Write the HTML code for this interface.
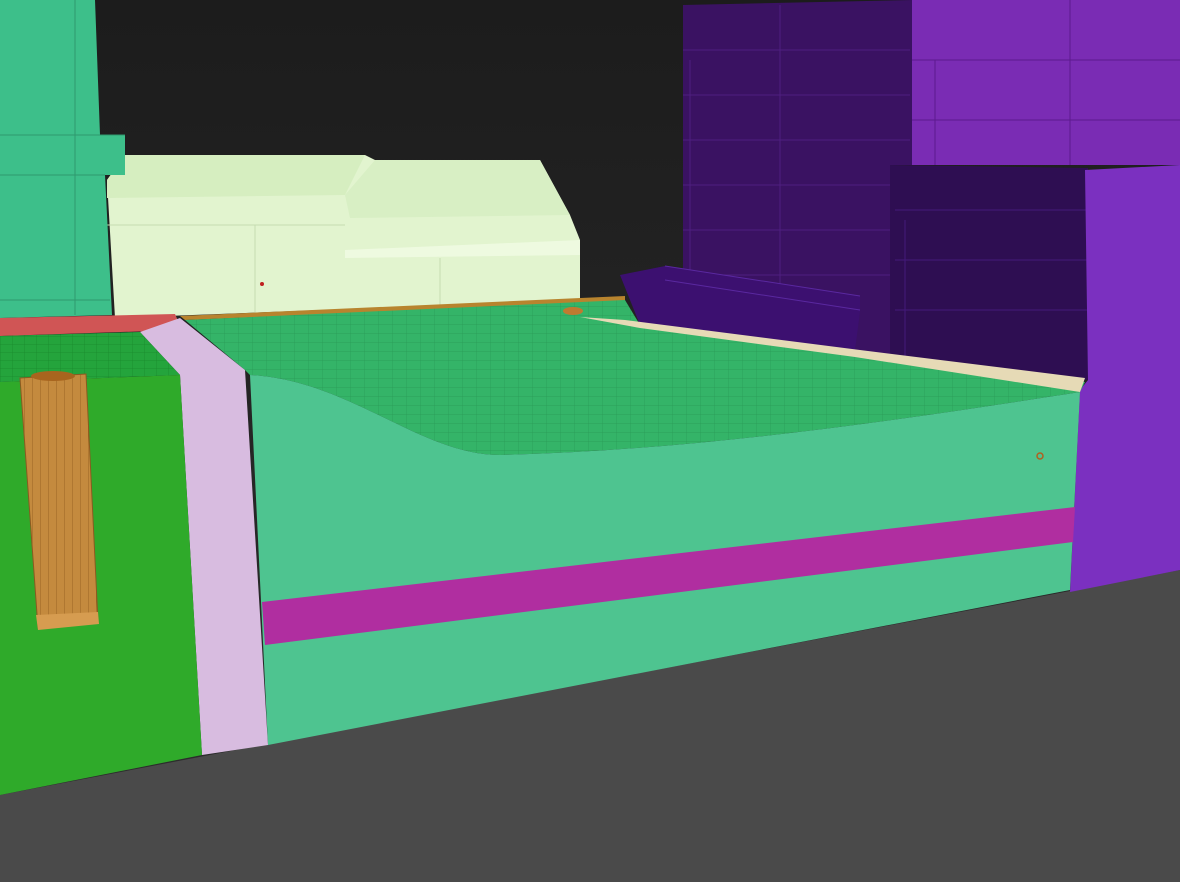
<!DOCTYPE html>
<html><head><meta charset="utf-8"><style>
html,body{margin:0;padding:0;background:#222;}
svg{display:block}
</style></head><body>
<svg width="1180" height="882" viewBox="0 0 1180 882" xmlns="http://www.w3.org/2000/svg">
<defs>
<linearGradient id="bg" x1="0" y1="0" x2="0" y2="1"><stop offset="0" stop-color="#1c1c1c"/><stop offset="1" stop-color="#2e2e2e"/></linearGradient>
<pattern id="mesh" width="14" height="9" patternUnits="userSpaceOnUse"><rect width="14" height="9" fill="#34b468"/><path d="M0 0H14M0 0V9" stroke="#2a9a55" stroke-width="0.7"/></pattern>
<pattern id="mesh2" width="12" height="8" patternUnits="userSpaceOnUse"><rect width="12" height="8" fill="#24a43c"/><path d="M0 0H12M0 0V8" stroke="#188a2c" stroke-width="0.8"/></pattern>
<pattern id="wood" width="8" height="10" patternUnits="userSpaceOnUse"><rect width="8" height="10" fill="#c48a3e"/><path d="M0 0V10" stroke="#9a6424" stroke-width="1"/></pattern>
</defs>
<rect width="1180" height="882" fill="url(#bg)"/>
<!-- floor -->
<polygon points="0,795 1180,570 1180,882 0,882" fill="#4a4a4a"/>
<!-- pale building -->
<polygon points="107,180 125,155 365,155 375,160 540,160 570,215 580,240 580,300 115,318" fill="#e2f4cf"/>
<polygon points="107,180 125,155 365,155 345,195 107,198" fill="#d6eec0"/>
<polygon points="345,195 375,160 540,160 570,215 350,218" fill="#d8efc4"/>
<polygon points="345,250 580,240 580,255 345,258" fill="#eefae0"/>
<line x1="107" y1="225" x2="345" y2="225" stroke="#c5dcb0"/>
<line x1="255" y1="225" x2="255" y2="312" stroke="#c5dcb0"/>
<line x1="440" y1="258" x2="440" y2="305" stroke="#c5dcb0"/>
<circle cx="262" cy="284" r="2" fill="#c02020"/>
<!-- left teal building -->
<polygon points="0,0 95,0 100,135 125,135 125,175 105,175 112,315 0,318" fill="#3dbf8a"/>
<path d="M0 135H125M0 175H105M75 0V315M0 300H110" stroke="#2f9a6e" fill="none"/>
<!-- purple buildings -->
<polygon points="683,5 912,0 912,165 890,165 890,360 683,330" fill="#3a1262"/>
<path d="M683 50H910M683 95H910M683 140H910M683 185H890M683 230H890M683 275H890M780 5V320M690 60V320" stroke="#4e1f80" fill="none"/>
<polygon points="912,0 1180,0 1180,165 912,165" fill="#7a2cb4"/>
<path d="M912 60H1180M912 120H1180M1070 0V165M935 60V165" stroke="#5c1a8e" fill="none"/>
<polygon points="890,165 1088,168 1088,235 1095,235 1088,380 890,365" fill="#2e0e52"/>
<path d="M895 210H1088M895 260H1088M895 310H1088M905 220V360" stroke="#44197a" fill="none"/>
<polygon points="1085,170 1180,165 1180,570 1070,592 1080,390 1088,380" fill="#7b30c0"/>
<!-- wall -->
<polygon points="620,275 665,266 860,296 860,312 855,350 640,325" fill="#3c1070"/>
<path d="M665 266L860 296M665 280L860 310" stroke="#5a28a0" fill="none"/>
<!-- red strip -->
<polygon points="0,318 175,314 182,330 0,336" fill="#d05555"/>
<!-- wood ledge back -->
<polygon points="180,316 625,296 625,302 185,320" fill="#b8842e"/>
<!-- top terrain mesh -->
<path d="M185,320 L625,300 L640,325 L1085,382 L1080,392 C900,420 700,450 500,455 C420,455 350,380 250,375 L245,370 Z" fill="url(#mesh)"/>
<!-- beige ledge -->
<polygon points="580,317 625,320 860,350 1085,378 1080,392 855,357 640,328" fill="#e6dab6"/>
<ellipse cx="573" cy="311" rx="10" ry="4" fill="#c07a30"/>
<!-- front face -->
<path d="M250,375 C350,380 420,455 500,455 C700,450 900,420 1080,392 L1070,590 L268,745 Z" fill="#4ec490"/>
<polygon points="262,602 1075,507 1073,542 265,645" fill="#b02ea0"/>
<circle cx="1040" cy="456" r="3" fill="none" stroke="#b06020" stroke-width="1.5"/>
<!-- pink strip -->
<polygon points="140,332 180,318 245,370 268,745 202,755 180,375" fill="#d8bce0"/>
<!-- left green -->
<polygon points="0,336 140,332 180,375 0,382" fill="url(#mesh2)"/>
<polygon points="0,382 180,375 202,755 0,795" fill="#2faa2a"/>
<!-- plank -->
<polygon points="20,378 86,374 98,622 38,628" fill="url(#wood)" stroke="#8a5a20"/>
<ellipse cx="53" cy="376" rx="22" ry="5" fill="#a8651e"/>
<polygon points="36,615 98,612 99,624 38,630" fill="#d69c50"/>
</svg>
</body></html>
